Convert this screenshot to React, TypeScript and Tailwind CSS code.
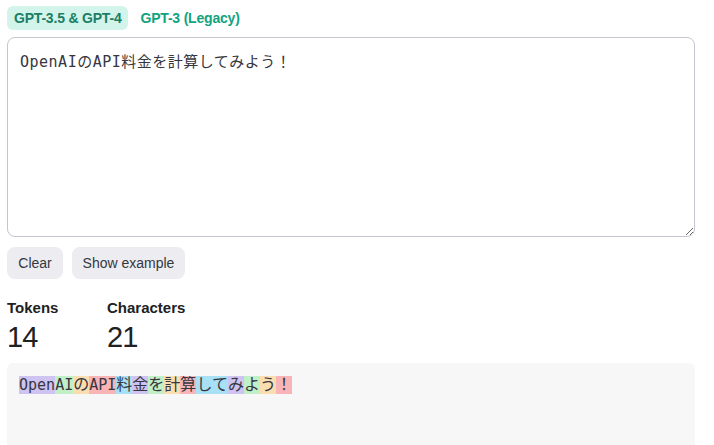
import { useState } from "react";

const tokens = [
  "Open",
  "AI",
  "の",
  "API",
  "料",
  "金",
  "を",
  "計",
  "算",
  "して",
  "み",
  "よ",
  "う",
  "！",
];

const tokenColors = [
  "bg-[#cfc3f1]",
  "bg-[#c1f0c8]",
  "bg-[#fbdeb0]",
  "bg-[#f8b4b6]",
  "bg-[#a8e0f6]",
];

const mono = "font-['DejaVu_Sans_Mono','Noto_Sans_CJK_JP',monospace]";

// full-width tokens are drawn a touch larger, as in the reference
const isWide = (t: string) => /[^\x00-\x7f]/.test(t);

export default function App() {
  const [text, setText] = useState("OpenAIのAPI料金を計算してみよう！");

  return (
    <div className="min-h-[445px] bg-white pl-[7px] pr-[19px] pt-[6px] font-['Liberation_Sans',Arial,sans-serif] text-[#202123]">
      {/* Model tabs */}
      <div className="flex items-center gap-[5px]">
        <button className="h-[24px] rounded-md bg-[#d2f4ea] px-[7px] text-[14px] font-bold tracking-[-0.2px] text-[#1a7f64]">
          GPT-3.5 &amp; GPT-4
        </button>
        <button className="h-[24px] rounded-md px-[7px] text-[14px] font-bold tracking-[-0.2px] text-[#10a37f]">
          GPT-3 (Legacy)
        </button>
      </div>

      {/* Input */}
      <textarea
        value={text}
        onChange={(e) => setText(e.target.value)}
        className={`mt-[7px] block h-[200px] w-full resize-y rounded-lg border border-[#c5c5d2] px-[12px] py-[13px] text-[15px] leading-[22px] tracking-[0.5px] text-[#353740] outline-none ${mono}`}
      />

      {/* Actions */}
      <div className="mt-[10px] flex gap-[9px]">
        <button className="h-[32px] w-[56px] rounded-lg bg-[#ececf1] text-[14px] font-medium text-[#353740]">
          Clear
        </button>
        <button className="h-[32px] w-[113px] rounded-lg bg-[#ececf1] text-[14px] font-medium text-[#353740]">
          Show example
        </button>
      </div>

      {/* Stats */}
      <div className="mt-[20px] flex">
        <div className="w-[100px]">
          <div className="text-[15px] font-bold leading-[18px]">Tokens</div>
          <div className="mt-[3px] text-[29px] leading-[35px] tracking-[-1px] text-[#202123]">14</div>
        </div>
        <div>
          <div className="text-[15px] font-bold leading-[18px]">Characters</div>
          <div className="mt-[3px] text-[29px] leading-[35px] tracking-[-1px] text-[#202123]">21</div>
        </div>
      </div>

      {/* Tokenized output */}
      <div className="mt-[8px] h-[100px] rounded-t-md bg-[#f7f7f8] px-[12px] pt-[13px]">
        <div className={`flex text-[15px] leading-[18px] text-[#353740] ${mono}`}>
          {tokens.map((t, i) => (
            <span
              key={i}
              className={`${tokenColors[i % 5]} ${isWide(t) ? "text-[16px]" : ""}`}
            >
              {t}
            </span>
          ))}
        </div>
      </div>
    </div>
  );
}
